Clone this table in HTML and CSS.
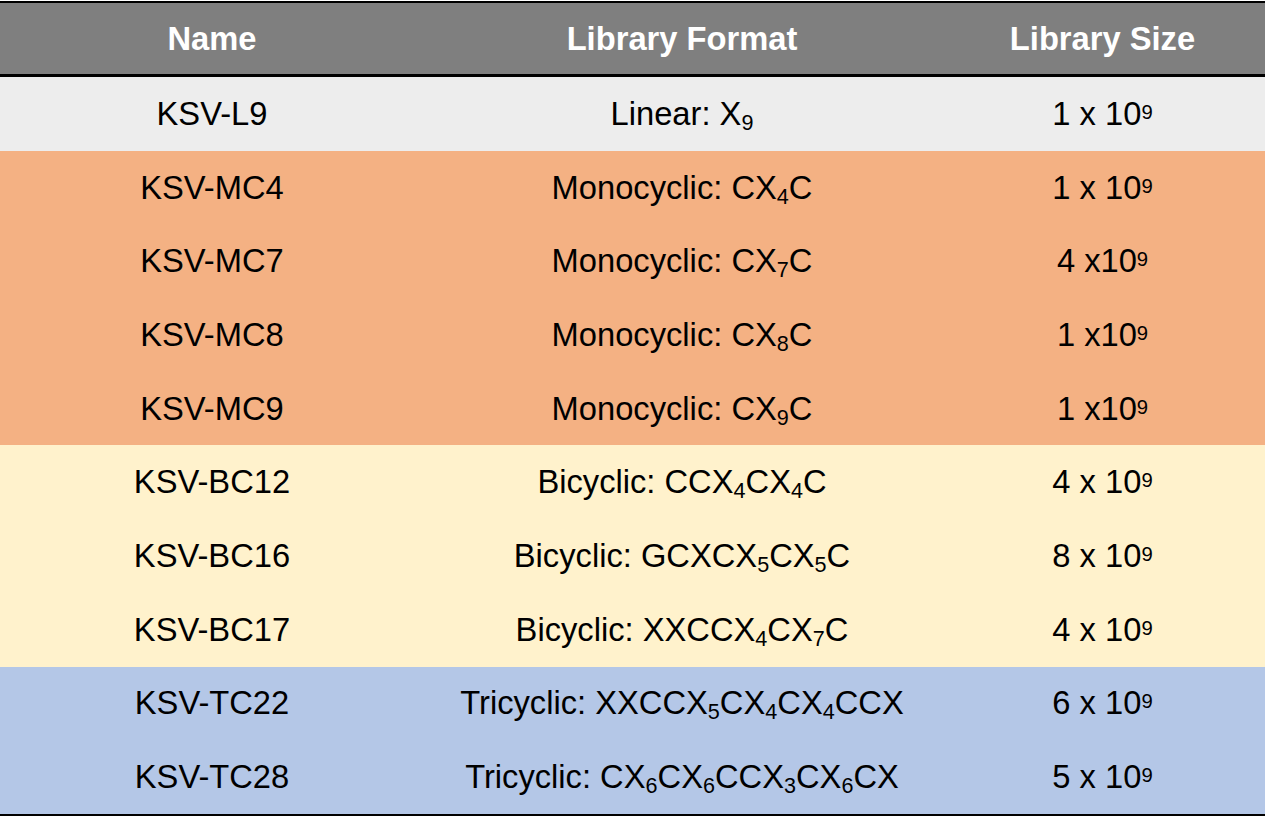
FILE: index.html
```html
<!DOCTYPE html>
<html>
<head>
<meta charset="utf-8">
<link rel="stylesheet" href="styles.css">
</head>
<body>
<table class="lib">
  <thead>
    <tr><th class="c1">Name</th><th class="c2">Library Format</th><th class="c3">Library Size</th></tr>
  </thead>
  <tbody>
    <tr class="gray"><td>KSV-L9</td><td>Linear: X<sub>9</sub></td><td>1 x 10<sup>9</sup></td></tr>
    <tr class="orange"><td>KSV-MC4</td><td>Monocyclic: CX<sub>4</sub>C</td><td>1 x 10<sup>9</sup></td></tr>
    <tr class="orange"><td>KSV-MC7</td><td>Monocyclic: CX<sub>7</sub>C</td><td>4 x10<sup>9</sup></td></tr>
    <tr class="orange"><td>KSV-MC8</td><td>Monocyclic: CX<sub>8</sub>C</td><td>1 x10<sup>9</sup></td></tr>
    <tr class="orange"><td>KSV-MC9</td><td>Monocyclic: CX<sub>9</sub>C</td><td>1 x10<sup>9</sup></td></tr>
    <tr class="yellow"><td>KSV-BC12</td><td>Bicyclic: CCX<sub>4</sub>CX<sub>4</sub>C</td><td>4 x 10<sup>9</sup></td></tr>
    <tr class="yellow"><td>KSV-BC16</td><td>Bicyclic: GCXCX<sub>5</sub>CX<sub>5</sub>C</td><td>8 x 10<sup>9</sup></td></tr>
    <tr class="yellow"><td>KSV-BC17</td><td>Bicyclic: XXCCX<sub>4</sub>CX<sub>7</sub>C</td><td>4 x 10<sup>9</sup></td></tr>
    <tr class="blue"><td>KSV-TC22</td><td>Tricyclic: XXCCX<sub>5</sub>CX<sub>4</sub>CX<sub>4</sub>CCX</td><td>6 x 10<sup>9</sup></td></tr>
    <tr class="blue"><td>KSV-TC28</td><td>Tricyclic: CX<sub>6</sub>CX<sub>6</sub>CCX<sub>3</sub>CX<sub>6</sub>CX</td><td>5 x 10<sup>9</sup></td></tr>
  </tbody>
</table>
</body>
</html>
```
FILE: styles.css
```css
html, body {
  margin: 0;
  padding: 0;
  background: #ffffff;
}

.lib {
  margin-top: 1px;
  width: 1265px;
  border-collapse: collapse;
  border-top: 2px solid #000;
  border-bottom: 2px solid #000;
  font-family: "Liberation Sans", Arial, sans-serif;
  font-size: 32.7px;
  color: #000;
  table-layout: fixed;
}

.lib th {
  background: #7f7f7f;
  color: #fff;
  font-weight: bold;
  height: 71px;
  padding: 0;
  text-align: center;
  vertical-align: middle;
  border-bottom: 3px solid #000;
}

.lib .c1 { width: 424px; }
.lib .c2 { width: 516px; }
.lib .c3 { width: 325px; }

.lib td {
  height: 73.7px;
  padding: 0;
  text-align: center;
  vertical-align: middle;
}

.lib sub {
  font-size: 0.66em;
  vertical-align: -0.22em;
  line-height: 0;
}

.lib sup {
  font-size: 0.62em;
  vertical-align: 0.3em;
  line-height: 0;
}

.gray td { background: #ededed; }
.orange td { background: #f4b183; }
.yellow td { background: #fff2cc; }
.blue td { background: #b4c7e7; }
```
